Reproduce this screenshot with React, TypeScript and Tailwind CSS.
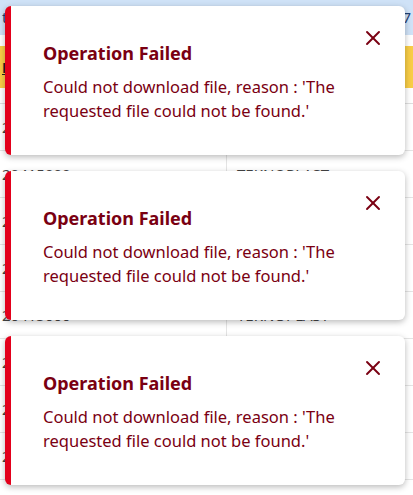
import { X } from 'lucide-react';

const rows = ['20415000', '20415000', '20415000', '20415000', '20415000', '20415000', '20415000', '20415000'];

function Toast() {
  return (
    <div className="relative h-[149px] rounded-md border-l-[6px] border-[#e3001b] bg-white pl-[32px] pr-[40px] pt-[35px] shadow-[0_2px_6px_rgba(0,0,0,0.28)]">
      <button className="absolute right-[20px] top-[20px] text-[#7a0012]">
        <X size={24} strokeWidth={1.9} />
      </button>
      <h4 className="text-[18px] font-bold leading-[24px] text-[#7a0012]">Operation Failed</h4>
      <p className="mt-[10px] text-[16.5px] leading-[24px] text-[#7a0012]">
        Could not download file, reason : 'The requested file could not be found.'
      </p>
    </div>
  );
}

export default function App() {
  return (
    <div className="relative h-[495px] w-[413px] overflow-hidden bg-white" style={{ fontFamily: '"Noto Sans", "Open Sans", sans-serif' }}>
      <div className="flex h-[35px] items-center justify-between bg-[#cfe2f7] px-[2px] text-[15px] text-[#1f3f73]">
        <span>the search results</span>
        <span>1 - 50 of 1207</span>
      </div>
      <div className="mt-[11px] flex h-[42px] items-center bg-[#f8cd46] px-[2px] text-[15px] font-bold text-[#222]">
        <span className="w-[227px] underline">Reference</span>
        <span className="pl-[10px] underline">Supplier</span>
      </div>
      <div className="h-[16px] border-b border-[#dedede]" />
      {rows.map((r, i) => (
        <div key={i} className="flex h-[47px] items-center border-b border-[#e4e4e4] text-[15px] text-[#444]">
          <span className="w-[227px] border-r border-[#e4e4e4] pl-[2px] leading-[46px]">{r}</span>
          <span className="pl-[10px]">TEKNOPLAST</span>
        </div>
      ))}
      <div className="absolute left-[5px] top-[6px] flex w-[400px] flex-col gap-[16px]">
        <Toast />
        <Toast />
        <Toast />
      </div>
    </div>
  );
}
